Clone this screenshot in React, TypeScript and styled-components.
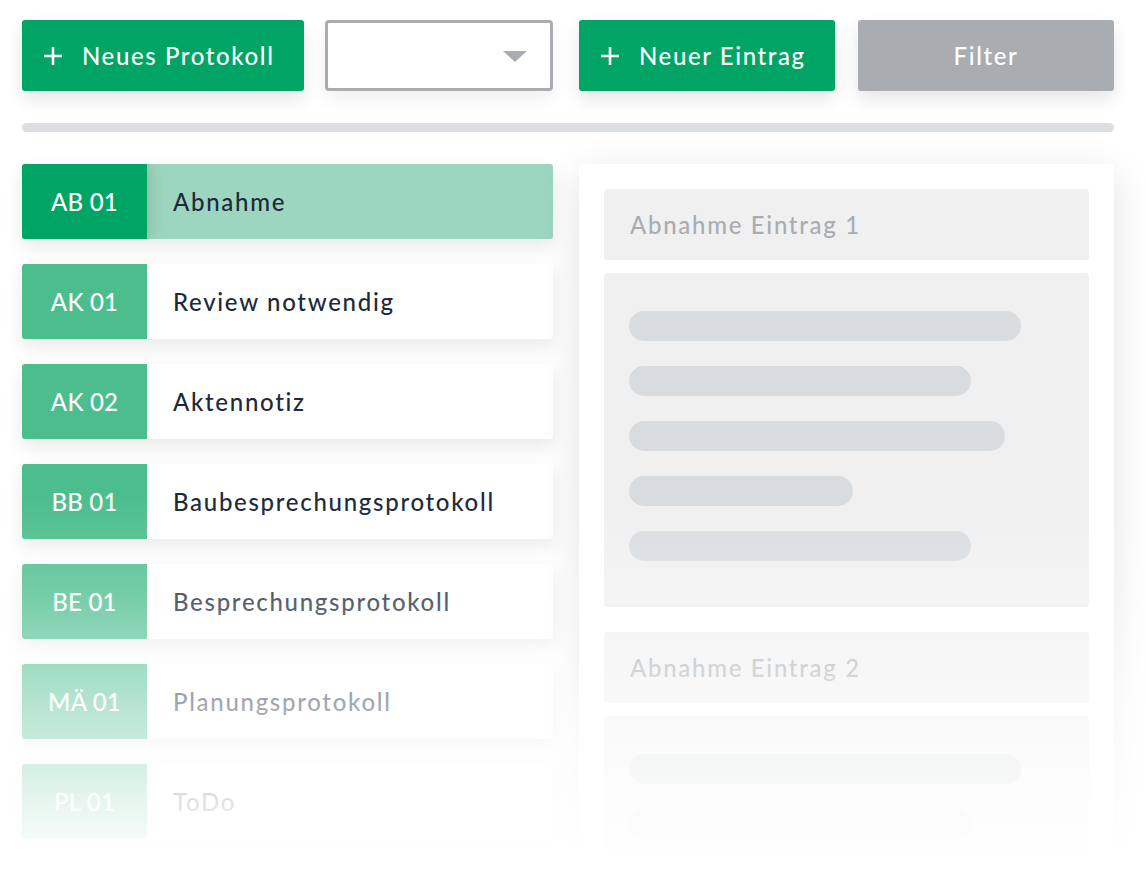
import styled, { createGlobalStyle } from "styled-components";

const GlobalStyle = createGlobalStyle`
  html, body {
    margin: 0;
    padding: 0;
    background: #ffffff;
  }
  body {
    font-family: Lato, "Noto Sans", sans-serif;
  }
`;

type Entry = { code: string; name: string };

const ENTRIES: Entry[] = [
  { code: "AB 01", name: "Abnahme" },
  { code: "AK 01", name: "Review notwendig" },
  { code: "AK 02", name: "Aktennotiz" },
  { code: "BB 01", name: "Baubesprechungsprotokoll" },
  { code: "BE 01", name: "Besprechungsprotokoll" },
  { code: "MÄ 01", name: "Planungsprotokoll" },
  { code: "PL 01", name: "ToDo" },
];

const BARS = [392, 342, 376, 224, 342];

const PlusIcon = () => (
  <svg width="20" height="20" viewBox="0 0 20 20" fill="none">
    <path d="M10 1v18M1 10h18" stroke="#fff" strokeWidth="2.6" />
  </svg>
);

export default function App() {
  return (
    <>
      <GlobalStyle />
      <Page>
        <Toolbar>
          <Group>
            <GreenButton $width={282}>
              <PlusIcon />
              Neues Protokoll
            </GreenButton>
            <Select>
              <Caret />
            </Select>
          </Group>
          <Group $gap={23}>
            <GreenButton $width={256}>
              <PlusIcon />
              Neuer Eintrag
            </GreenButton>
            <GrayButton>Filter</GrayButton>
          </Group>
        </Toolbar>
        <Divider />
        <Columns>
          <List>
            {ENTRIES.map((e, i) => (
              <Row key={e.code} $active={i === 0}>
                <Code $active={i === 0}>{e.code}</Code>
                <Name>{e.name}</Name>
              </Row>
            ))}
          </List>
          <Panel>
            {[1, 2].map((n) => (
              <EntryBlock key={n}>
                <EntryHeader>Abnahme Eintrag {n}</EntryHeader>
                <EntryBody>
                  {BARS.map((w, i) => (
                    <Bar key={i} style={{ width: w }} />
                  ))}
                </EntryBody>
              </EntryBlock>
            ))}
          </Panel>
        </Columns>
        <Fade />
      </Page>
    </>
  );
}

const Page = styled.div`
  position: relative;
  height: 884px;
  overflow: hidden;
  padding: 20px 32px 0 22px;
  box-sizing: border-box;
  width: 1146px;
`;

const Toolbar = styled.div`
  display: grid;
  grid-template-columns: 531px 535px;
  gap: 26px;
`;

const Group = styled.div<{ $gap?: number }>`
  display: flex;
  gap: ${({ $gap }) => $gap ?? 21}px;
`;

const GreenButton = styled.div<{ $width: number }>`
  width: ${({ $width }) => $width}px;
  height: 71px;
  box-sizing: border-box;
  background: #00a566;
  border-radius: 3px;
  box-shadow: 0 8px 18px rgba(0, 0, 0, 0.1);
  color: #fff;
  display: flex;
  align-items: center;
  gap: 19px;
  padding-left: 21px;
  font-size: 24px;
  font-weight: 500;
  letter-spacing: 1.6px;
`;

const GrayButton = styled.div`
  flex: 1;
  height: 71px;
  background: #a9adb1;
  border-radius: 3px;
  box-shadow: 0 8px 18px rgba(0, 0, 0, 0.1);
  color: #fff;
  display: flex;
  align-items: center;
  justify-content: center;
  font-size: 24px;
  font-weight: 500;
  letter-spacing: 1.6px;
`;

const Select = styled.div`
  flex: 1;
  height: 71px;
  box-sizing: border-box;
  border: 3px solid #a9adb1;
  border-radius: 4px;
  background: #fff;
  box-shadow: 0 8px 18px rgba(0, 0, 0, 0.06);
  display: flex;
  align-items: center;
  justify-content: flex-end;
  padding-right: 23px;
`;

const Caret = styled.div`
  width: 0;
  height: 0;
  border-left: 12px solid transparent;
  border-right: 12px solid transparent;
  border-top: 11px solid #a9adb1;
  margin-top: 2px;
`;

const Divider = styled.div`
  margin-top: 32px;
  height: 9px;
  border-radius: 5px;
  background: #dcdfe2;
`;

const Columns = styled.div`
  margin-top: 32px;
  display: grid;
  grid-template-columns: 531px 535px;
  gap: 26px;
  align-items: start;
`;

const List = styled.div`
  display: flex;
  flex-direction: column;
  gap: 25px;
`;

const Row = styled.div<{ $active: boolean }>`
  height: 75px;
  display: flex;
  border-radius: 3px;
  overflow: hidden;
  background: ${({ $active }) => ($active ? "#9dd6c0" : "#ffffff")};
  box-shadow: 0 8px 20px rgba(0, 0, 0, 0.09);
`;

const Code = styled.div<{ $active: boolean }>`
  width: 125px;
  flex-shrink: 0;
  background: ${({ $active }) => ($active ? "#00a566" : "#4cbe8e")};
  color: #fff;
  display: flex;
  align-items: center;
  justify-content: center;
  font-size: 24px;
  font-weight: 500;
  letter-spacing: 0.2px;
  box-shadow: ${({ $active }) => ($active ? "4px 0 12px rgba(0,0,0,0.12)" : "none")};
  position: relative;
  z-index: 1;
`;

const Name = styled.div`
  display: flex;
  align-items: center;
  padding-left: 26px;
  color: #1c2a3a;
  font-size: 24px;
  font-weight: 500;
  letter-spacing: 1.7px;
`;

const Panel = styled.div`
  background: #fff;
  border-radius: 4px;
  box-shadow: 0 10px 40px rgba(0, 0, 0, 0.12);
  padding: 25px;
  display: flex;
  flex-direction: column;
  gap: 25px;
  height: 760px;
  box-sizing: border-box;
`;

const EntryBlock = styled.div`
  display: flex;
  flex-direction: column;
  gap: 13px;
`;

const EntryHeader = styled.div`
  height: 71px;
  background: #f0f0f0;
  border-radius: 4px;
  display: flex;
  align-items: center;
  padding-left: 26px;
  color: #a9adb2;
  font-size: 24px;
  font-weight: 500;
  letter-spacing: 1.7px;
`;

const EntryBody = styled.div`
  background: #f0f0f0;
  border-radius: 4px;
  padding: 38px 25px 46px;
  display: flex;
  flex-direction: column;
  gap: 25px;
`;

const Bar = styled.div`
  height: 30px;
  border-radius: 15px;
  background: #d9dcdf;
`;

const Fade = styled.div`
  position: absolute;
  inset: 0;
  z-index: 10;
  pointer-events: none;
  background: linear-gradient(
    to bottom,
    rgba(255, 255, 255, 0) 0px,
    rgba(255, 255, 255, 0) 500px,
    rgba(255, 255, 255, 0.22) 590px,
    rgba(255, 255, 255, 0.58) 700px,
    rgba(255, 255, 255, 0.86) 800px,
    rgba(255, 255, 255, 1) 865px
  );
`;
